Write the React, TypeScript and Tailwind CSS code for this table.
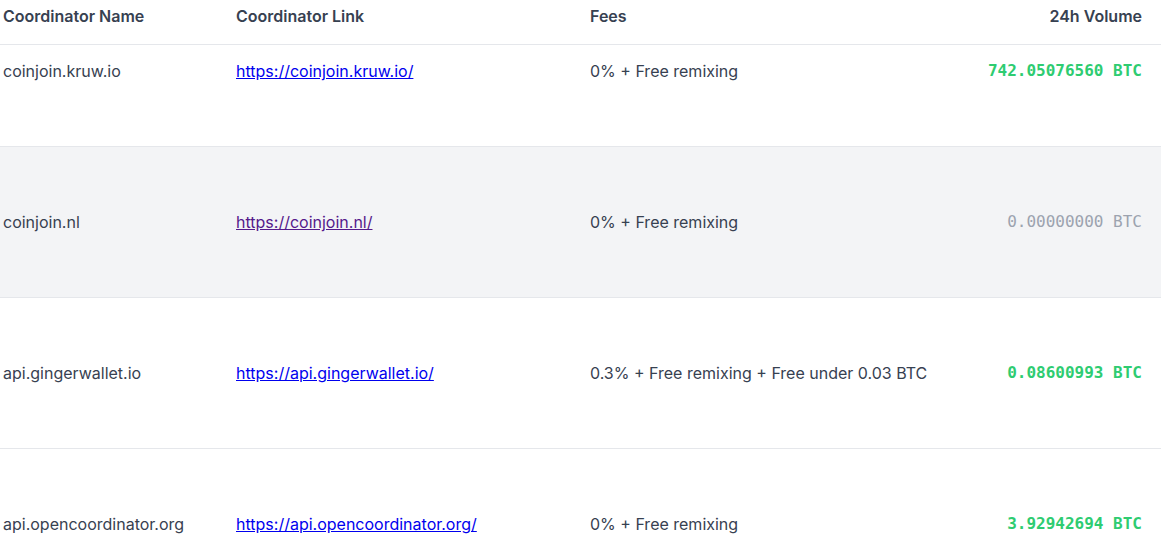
const rows = [
  {
    name: "coinjoin.kruw.io",
    link: "https://coinjoin.kruw.io/",
    visited: false,
    fees: "0% + Free remixing",
    volume: "742.05076560",
    active: true,
  },
  {
    name: "coinjoin.nl",
    link: "https://coinjoin.nl/",
    visited: true,
    fees: "0% + Free remixing",
    volume: "0.00000000",
    active: false,
  },
  {
    name: "api.gingerwallet.io",
    link: "https://api.gingerwallet.io/",
    visited: false,
    fees: "0.3% + Free remixing + Free under 0.03 BTC",
    volume: "0.08600993",
    active: true,
  },
  {
    name: "api.opencoordinator.org",
    link: "https://api.opencoordinator.org/",
    visited: false,
    fees: "0% + Free remixing",
    volume: "3.92942694",
    active: true,
  },
];

export default function App() {
  return (
    <div className="w-[1161px] h-[550px] overflow-hidden bg-white font-['Inter',sans-serif] text-base text-[#374151]">
      {/* header */}
      <div className="grid grid-cols-[233px_354px_1fr_auto] items-start h-[45px] pt-[4px] pl-[3px] pr-[19px] border-b border-[#e5e7eb] font-semibold">
        <div>Coordinator Name</div>
        <div>Coordinator Link</div>
        <div>Fees</div>
        <div className="text-right">24h Volume</div>
      </div>

      {rows.map((row, i) => (
        <div
          key={row.name}
          className={`grid grid-cols-[233px_354px_1fr_auto] pl-[3px] pr-[19px] border-b border-[#e5e7eb] ${
            i === 0 ? "h-[102px] items-start pt-[14px]" : "h-[151px] items-center"
          } ${i === 1 ? "bg-[#f3f4f6]" : "bg-white"}`}
        >
          <div>{row.name}</div>
          <div>
            <a
              href="#"
              className={`underline ${row.visited ? "text-[#551a8b]" : "text-[#0000ee]"}`}
            >
              {row.link}
            </a>
          </div>
          <div>{row.fees}</div>
          <div
            className={`text-right font-['DejaVu_Sans_Mono',monospace] ${
              row.active ? "font-bold text-[#2ecc71]" : "text-[#9ca3af]"
            }`}
          >
            {row.volume} BTC
          </div>
        </div>
      ))}
    </div>
  );
}
